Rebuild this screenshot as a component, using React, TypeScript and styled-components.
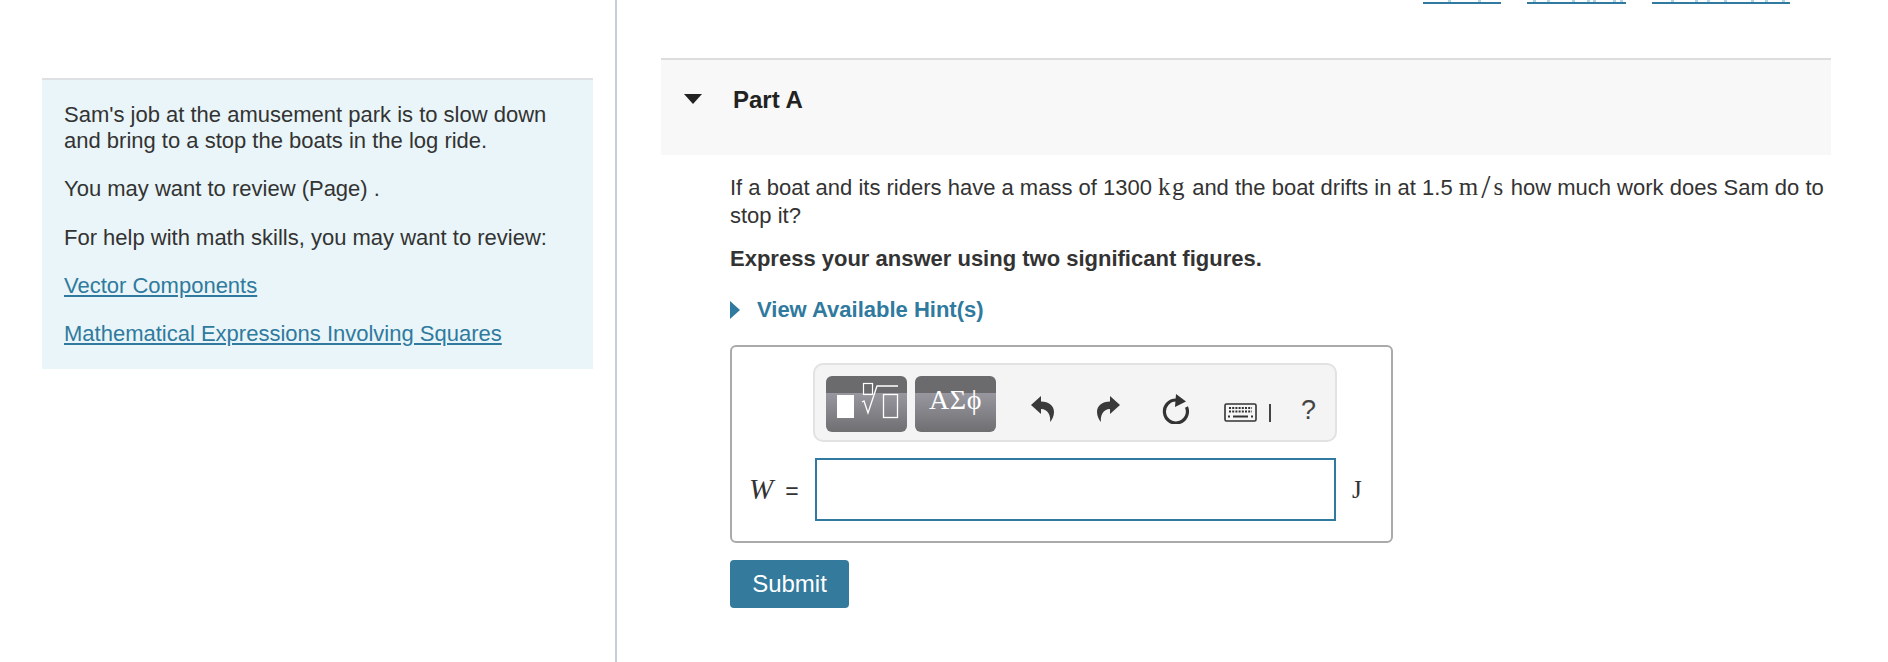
import React from 'react';
import styled, { createGlobalStyle } from 'styled-components';

const Global = createGlobalStyle`
  html, body { margin: 0; padding: 0; background: #fff; overflow: hidden; }
  body { font-family: "Liberation Sans", Arial, sans-serif; color: #333; }
`;

const Page = styled.div`
  display: flex;
  height: 662px;
  overflow: hidden;
`;
const Sidebar = styled.aside`
  width: 617px;
  flex: none;
  box-sizing: border-box;
  padding: 78px 22px 0 42px;
  border-right: 2px solid #c5cfdc;
`;
const InfoPanel = styled.div`
  background: #e9f5f8;
  border-top: 2px solid #dde1e4;
  padding: 22px 22px 22px 22px;
  font-size: 22px;
  line-height: 26.2px;
`;
const InfoText = styled.p`
  margin: 0 0 22px;
  &:last-child { margin-bottom: 0; }
`;
const Link = styled.a`
  color: #2f7a9e;
  text-decoration: underline;
`;
const Main = styled.main`
  flex: 1;
  min-width: 0;
  padding: 0 57px 0 44px;
`;
const TopLinks = styled.div`
  height: 58px;
  display: flex;
  justify-content: flex-end;
  align-items: flex-start;
  gap: 26px;
  padding-right: 41px;
`;
const TopLink = styled.span<{ $w: number }>`
  display: block;
  width: ${(p) => p.$w}px;
  height: 2px;
  border-bottom: 2px solid #2f7a9e;
  line-height: 0;
`;
const PartHeader = styled.div`
  height: 95px;
  background: #f8f8f8;
  border-top: 2px solid #ddd;
  display: flex;
  align-items: flex-start;
`;
const Caret = styled.span`
  width: 0;
  height: 0;
  margin: 34px 0 0 23px;
  border-left: 9px solid transparent;
  border-right: 9px solid transparent;
  border-top: 10px solid #222;
`;
const PartTitle = styled.h2`
  margin: 26px 0 0 31px;
  font-size: 24px;
  line-height: 28px;
  font-weight: 700;
  color: #222;
`;
const Body = styled.div`
  padding: 19px 0 0 69px;
`;
const Question = styled.p`
  margin: 0;
  font-size: 22px;
  line-height: 28px;
`;
const MathText = styled.span`
  font-family: "Liberation Serif", serif;
  font-size: 25px;
  letter-spacing: 1.5px;
  line-height: 0;
`;
const Slash = styled.span`
  font-size: 33px;
  line-height: 0;
  vertical-align: -3px;
  margin: 0 1.5px;
`;
const Instruction = styled.p`
  margin: 15px 0 0;
  font-size: 22px;
  line-height: 28px;
  font-weight: 700;
`;
const HintRow = styled.div`
  display: flex;
  align-items: center;
  margin-top: 23px;
  height: 28px;
  font-size: 22px;
  font-weight: 700;
  color: #2f7a9e;
`;
const HintCaret = styled.span`
  width: 0;
  height: 0;
  margin-right: 17px;
  border-top: 9px solid transparent;
  border-bottom: 9px solid transparent;
  border-left: 10px solid #2f7a9e;
`;
const AnswerBox = styled.div`
  margin-top: 21px;
  box-sizing: border-box;
  width: 663px;
  height: 198px;
  border: 2px solid #aaa;
  border-radius: 6px;
  padding-top: 16px;
`;
const Toolbar = styled.div`
  margin-left: 81px;
  width: 524px;
  height: 79px;
  box-sizing: border-box;
  background: #f4f4f4;
  border: 2px solid #e2e2e2;
  border-radius: 10px;
  display: flex;
  align-items: flex-start;
  padding: 11px 0 0 11px;
`;
const PaletteButton = styled.div`
  width: 81px;
  height: 56px;
  margin-right: 8px;
  border-radius: 6px;
  flex: none;
  background: linear-gradient(#6b6b6e 0, #6b6b6e 31%, #98979f 31%, #6f6f72 100%);
  color: #fff;
  display: flex;
  align-items: flex-start;
  justify-content: center;
`;
const GreekLabel = styled.span`
  font-family: "Liberation Serif", serif;
  font-size: 28px;
  line-height: 30px;
  margin-top: 9px;
  letter-spacing: 0.5px;
`;
const ToolIcon = styled.span<{ $ml: number; $mt: number }>`
  display: flex;
  flex: none;
  margin-left: ${(p) => p.$ml}px;
  margin-top: ${(p) => p.$mt}px;
`;
const Bar = styled.span`
  width: 2px;
  height: 18px;
  background: #444;
  margin: 28px 0 0 12px;
`;
const HelpMark = styled.span`
  font-size: 27px;
  line-height: 30px;
  color: #444;
  margin: 19px 0 0 30px;
`;
const EquationRow = styled.div`
  display: flex;
  align-items: center;
  margin-top: 16px;
  padding-left: 17px;
`;
const EqLabel = styled.span`
  width: 66px;
  display: flex;
  gap: 12px;
  align-items: baseline;
`;
const VarW = styled.span`
  font-family: "Liberation Serif", serif;
  font-style: italic;
  font-size: 29px;
`;
const Equals = styled.span`
  font-size: 23px;
`;
const MathInput = styled.div`
  box-sizing: border-box;
  width: 521px;
  height: 63px;
  background: #fff;
  border: 2px solid #2f7a9e;
`;
const Unit = styled.span`
  margin-left: 16px;
  font-family: "Liberation Serif", serif;
  font-size: 25px;
`;
const Submit = styled.button`
  display: block;
  margin-top: 17px;
  width: 119px;
  height: 48px;
  border: 0;
  border-radius: 4px;
  background: #337a9c;
  color: #fff;
  font-family: "Liberation Sans", sans-serif;
  font-size: 24px;
`;

const Ticks = ({ at, w }: { at: number[]; w: number }) => (
  <svg width={w} height="2" viewBox={`0 0 ${w} 2`} style={{ display: 'block' }}>
    {at.map((x) => (
      <rect key={x} x={x} y="0" width="3" height="2" fill="#b3d4e2" />
    ))}
  </svg>
);

const Palette = () => (
  <svg width="81" height="56" viewBox="0 0 81 56" fill="none">
    <rect x="11" y="19" width="17" height="23" fill="#fff" />
    <rect x="37.5" y="7.5" width="9" height="11" stroke="#fff" strokeWidth="1.2" />
    <path d="M36 26 L38 25 L42 37 L51 10 H72" stroke="#fff" strokeWidth="1.3" />
    <rect x="57.5" y="18.5" width="14" height="23" stroke="#fff" strokeWidth="1.3" />
  </svg>
);
const Undo = () => (
  <svg width="23" height="26" viewBox="0 0 23 26">
    <path d="M0 9 L10 0 V5.5 C18 5.5 23 10 23 16 C23 20 21 24 19 26 C20 20 17 13 10 13 V18 Z" fill="#3a3a3a" />
  </svg>
);
const Redo = () => (
  <svg width="23" height="26" viewBox="0 0 23 26">
    <path d="M23 9 L13 0 V5.5 C5 5.5 0 10 0 16 C0 20 2 24 4 26 C3 20 6 13 13 13 V18 Z" fill="#3a3a3a" />
  </svg>
);
const Reset = () => (
  <svg width="27" height="30" viewBox="0 0 27 30" fill="none">
    <path d="M14 6 A11.5 11.5 0 1 0 24.5 13" stroke="#333" strokeWidth="3.2" />
    <path d="M14 0 L24 7.5 L13 13 Z" fill="#333" />
  </svg>
);
const Keyboard = () => (
  <svg width="33" height="19" viewBox="0 0 33 19" fill="none">
    <rect x="1" y="1" width="31" height="17" rx="1.5" fill="#f6f6f6" stroke="#333" strokeWidth="1.6" />
    <path d="M5 5h23M5 8.5h23" stroke="#333" strokeWidth="2" strokeDasharray="2 1.2" />
    <path d="M4 13.5h2M9 13.5h15M27 13.5h2" stroke="#333" strokeWidth="2" />
  </svg>
);

export default function App() {
  return (
    <Page>
      <Global />
      <Sidebar>
        <InfoPanel>
          <InfoText>Sam's job at the amusement park is to slow down and bring to a stop the boats in the log ride.</InfoText>
          <InfoText>You may want to review (Page) .</InfoText>
          <InfoText>For help with math skills, you may want to review:</InfoText>
          <InfoText><Link href="#">Vector Components</Link></InfoText>
          <InfoText><Link href="#">Mathematical Expressions Involving Squares</Link></InfoText>
        </InfoPanel>
      </Sidebar>
      <Main>
        <TopLinks>
          <TopLink $w={78}><Ticks w={78} at={[25, 55]} /></TopLink>
          <TopLink $w={99}><Ticks w={99} at={[6, 20, 45, 60, 66, 86, 93]} /></TopLink>
          <TopLink $w={138}><Ticks w={138} at={[19, 43, 55, 72, 99, 113, 130]} /></TopLink>
        </TopLinks>
        <PartHeader>
          <Caret />
          <PartTitle>Part A</PartTitle>
        </PartHeader>
        <Body>
          <Question>
            If a boat and its riders have a mass of 1300 <MathText>kg</MathText> and the boat drifts in at 1.5 <MathText>m<Slash>/</Slash>s</MathText> how much work does Sam do to stop it?
          </Question>
          <Instruction>Express your answer using two significant figures.</Instruction>
          <HintRow><HintCaret />View Available Hint(s)</HintRow>
          <AnswerBox>
            <Toolbar>
              <PaletteButton><Palette /></PaletteButton>
              <PaletteButton><GreekLabel>ΑΣϕ</GreekLabel></PaletteButton>
              <ToolIcon $ml={27} $mt={20}><Undo /></ToolIcon>
              <ToolIcon $ml={43} $mt={20}><Redo /></ToolIcon>
              <ToolIcon $ml={42} $mt={18}><Reset /></ToolIcon>
              <ToolIcon $ml={35} $mt={27}><Keyboard /></ToolIcon>
              <Bar />
              <HelpMark>?</HelpMark>
            </Toolbar>
            <EquationRow>
              <EqLabel><VarW>W</VarW><Equals>=</Equals></EqLabel>
              <MathInput />
              <Unit>J</Unit>
            </EquationRow>
          </AnswerBox>
          <Submit>Submit</Submit>
        </Body>
      </Main>
    </Page>
  );
}
